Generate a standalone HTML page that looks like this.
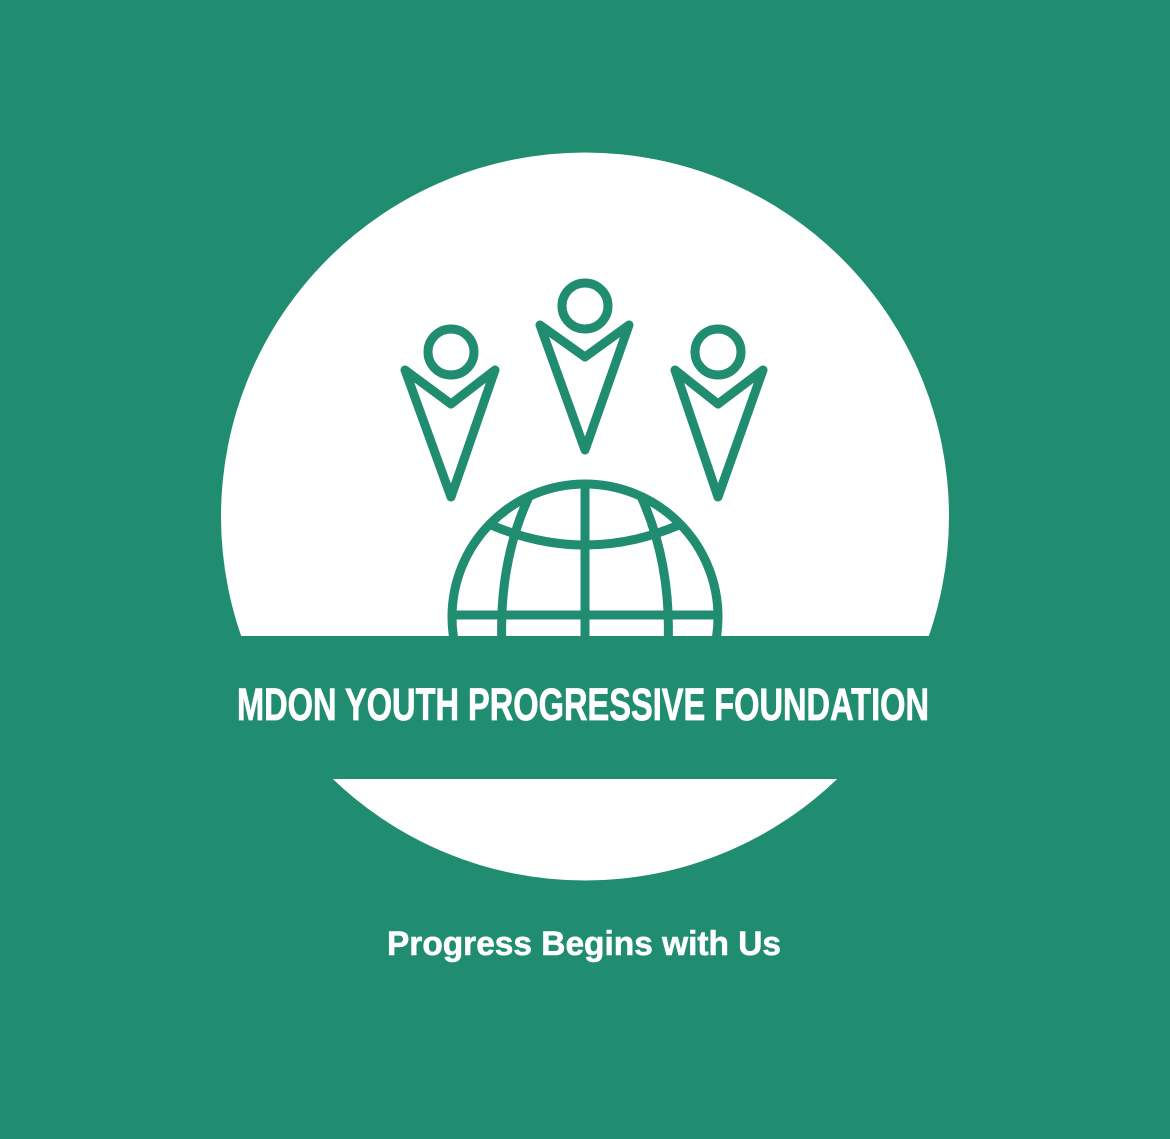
<!DOCTYPE html>
<html><head><meta charset="utf-8"><style>
html,body{margin:0;padding:0;background:#208c70;}
svg{display:block}
</style></head><body>
<svg width="1170" height="1139" viewBox="0 0 1170 1139" xmlns="http://www.w3.org/2000/svg">
<rect width="1170" height="1139" fill="#208c70"/>
<defs>
<clipPath id="top"><rect x="0" y="0" width="1170" height="636"/></clipPath>
<clipPath id="bot"><rect x="0" y="779" width="1170" height="400"/></clipPath>
<clipPath id="inglobe"><circle cx="585" cy="617" r="133"/></clipPath>
</defs>
<circle cx="585" cy="516.5" r="364" fill="#fff" clip-path="url(#top)"/>
<circle cx="585" cy="516.5" r="364" fill="#fff" clip-path="url(#bot)"/>
<g fill="none" stroke="#208c70" stroke-width="9" stroke-linejoin="round" stroke-linecap="round">
<circle cx="451" cy="352" r="23"/>
<path d="M405,370 L451,404 L495,370 L451,497 Z"/>
<circle cx="585" cy="306" r="23"/>
<path d="M540,325 L585,357 L629,325 L585,450 Z"/>
<circle cx="718" cy="352" r="23"/>
<path d="M675,370 L718,404 L763,370 L718,497 Z"/>
<g clip-path="url(#top)">
<circle cx="585" cy="617" r="133"/>
<line x1="585" y1="484" x2="585" y2="640"/>
<line x1="452" y1="615" x2="718" y2="615"/>
<g clip-path="url(#inglobe)">
<path d="M470,515 Q585,575 700,515"/>
<path d="M536,482 Q498,555 502,645"/>
<path d="M634,482 Q672,555 668,645"/>
</g>
</g>
</g>
<text x="237" y="720" font-family="Liberation Sans, sans-serif" font-weight="bold" font-size="45" fill="#fff" textLength="692" lengthAdjust="spacingAndGlyphs" stroke="#fff" stroke-width="0.8">MDON YOUTH PROGRESSIVE FOUNDATION</text>
<text x="387" y="955" font-family="Liberation Sans, sans-serif" font-weight="bold" font-size="34" fill="#fff" textLength="394" lengthAdjust="spacingAndGlyphs" stroke="#fff" stroke-width="0.6">Progress Begins with Us</text>
</svg>
</body></html>
